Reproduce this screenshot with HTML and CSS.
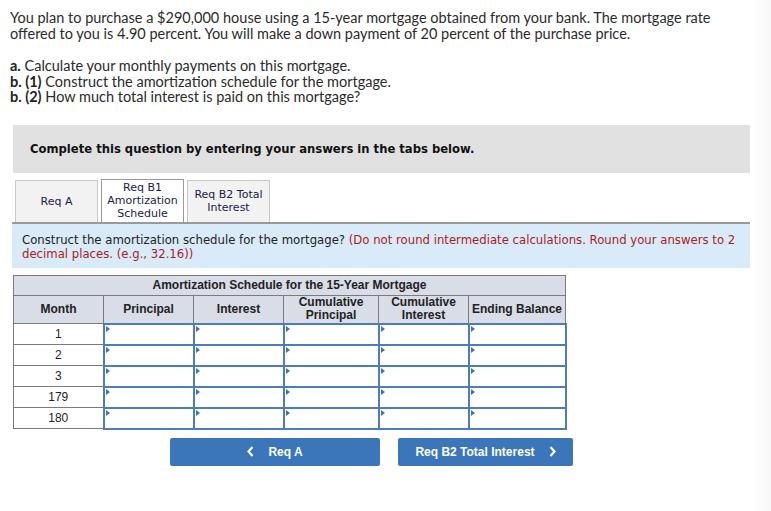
FILE: index.html
```html
<!DOCTYPE html>
<html>
<head>
<meta charset="utf-8">
<link rel="stylesheet" href="styles.css">
</head>
<body>
<div class="page">
  <div class="intro">
    <p>You plan to purchase a $290,000 house using a 15-year mortgage obtained from your bank. The mortgage rate offered to you is 4.90 percent. You will make a down payment of 20 percent of the purchase price.</p>
    <p class="last"><b>a.</b> Calculate your monthly payments on this mortgage.<br>
    <b>b. (1)</b> Construct the amortization schedule for the mortgage.<br>
    <b>b. (2)</b> How much total interest is paid on this mortgage?</p>
  </div>

  <div class="banner">Complete this question by entering your answers in the tabs below.</div>

  <div class="tabs">
    <div class="tab">Req A</div>
    <div class="tab active">Req B1<br>Amortization<br>Schedule</div>
    <div class="tab">Req B2 Total<br>Interest</div>
  </div>

  <div class="instr">Construct the amortization schedule for the mortgage? <span class="red">(Do not round intermediate calculations. Round your answers to 2 decimal places. (e.g., 32.16))</span></div>

  <table class="sched">
    <colgroup>
      <col class="w90"><col class="w90"><col class="w90"><col class="w95"><col class="w90"><col class="w97">
    </colgroup>
    <tr><th colspan="6" class="title">Amortization Schedule for the 15-Year Mortgage</th></tr>
    <tr class="hdr">
      <th>Month</th>
      <th>Principal</th>
      <th>Interest</th>
      <th>Cumulative<br>Principal</th>
      <th>Cumulative<br>Interest</th>
      <th>Ending Balance</th>
    </tr>
    <tr><td class="m">1</td><td class="in"></td><td class="in"></td><td class="in"></td><td class="in"></td><td class="in"></td></tr>
    <tr><td class="m">2</td><td class="in"></td><td class="in"></td><td class="in"></td><td class="in"></td><td class="in"></td></tr>
    <tr><td class="m">3</td><td class="in"></td><td class="in"></td><td class="in"></td><td class="in"></td><td class="in"></td></tr>
    <tr><td class="m">179</td><td class="in"></td><td class="in"></td><td class="in"></td><td class="in"></td><td class="in"></td></tr>
    <tr><td class="m">180</td><td class="in"></td><td class="in"></td><td class="in"></td><td class="in"></td><td class="in"></td></tr>
  </table>

  <div class="nav">
    <div class="btn prev"><svg class="chev" width="7" height="11" viewBox="0 0 7 11"><polyline points="5.5,1 1.5,5.5 5.5,10" fill="none" stroke="#fff" stroke-width="2.2"/></svg>Req A</div>
    <div class="btn next">Req B2 Total Interest<svg class="chev" width="7" height="11" viewBox="0 0 7 11"><polyline points="1.5,1 5.5,5.5 1.5,10" fill="none" stroke="#fff" stroke-width="2.2"/></svg></div>
  </div>
</div>
<div class="edge"></div>
</body>
</html>
```

FILE: styles.css
```css
html, body { margin: 0; padding: 0; background: #fff; }
body { position: relative; width: 771px; height: 511px; overflow: hidden; }
.page { padding: 10px 0 0 0; }

.intro { padding: 0 10px; max-width: 725px; font-family: "Lato", "Liberation Sans", sans-serif; font-size: 14.5px; line-height: 15.6px; color: #2b2b2b; }
.intro p { margin: 0 0 17px 0; }
.intro p.last { margin-bottom: 0; }
.intro b { font-weight: bold; color: #222; }

.banner {
  margin: 20px 21px 0 13px; height: 48px; background: #e1e1e1;
  font-family: "DejaVu Sans", Verdana, sans-serif; font-weight: bold; font-size: 11.6px;
  color: #111; display: flex; align-items: center; padding-left: 17px;
}

.tabs { display: flex; gap: 3px; margin: 6px 0 0 15px; align-items: flex-end; height: 43px; }
.tab {
  width: 83px; height: 42px; box-sizing: border-box; background: #f2f2f2; border: 1px solid #c8c8c8; border-bottom: none;
  font-family: "DejaVu Sans", Verdana, sans-serif; font-size: 11px; line-height: 13px; color: #1a1a4a;
  display: flex; align-items: center; justify-content: center; text-align: center;
}
.tab.active { background: #fff; border-color: #9a9a9a; height: 43px; }

.instr {
  margin: 0 21px 0 12px; background: #d9ebf8; border-top: 2px solid #9a9a9a; height: 46px; box-sizing: border-box;
  padding: 9px 2px 0 10px;
  font-family: "DejaVu Sans", Verdana, sans-serif; font-size: 11.7px; line-height: 14px; color: #222;
}
.instr .red { color: #ab1c1c; }

.sched {
  margin: 7px 0 0 13px; border-collapse: collapse; table-layout: fixed; width: 552px;
  font-family: "Liberation Sans", Arial, sans-serif; font-size: 12px; color: #222;
}
.w90 { width: 90px; } .w95 { width: 95px; } .w97 { width: 97px; }
.sched th { background: #d8dde7; border: 1px solid #7b7b7b; font-weight: bold; padding: 0; }
.sched th.title { height: 19px; }
.sched tr.hdr th { height: 27px; line-height: 13px; }
.sched td { height: 19px; padding: 0; }
.sched td.m { border: 1px solid #7b7b7b; text-align: center; background: #fff; }
.sched td.in { border: 2px solid #4c7db8; background: #fff; position: relative; }
.sched td.in::before {
  content: ""; position: absolute; left: 1px; top: 1px; width: 0; height: 0;
  border-top: 3px solid transparent; border-bottom: 3px solid transparent; border-left: 4px solid #3a73c0;
}

.nav { display: flex; gap: 18px; margin: 8px 0 0 170px; }
.btn {
  height: 28px; background: #3a76b9; border-radius: 2px; color: #fff;
  font-family: "Liberation Sans", Arial, sans-serif; font-weight: bold; font-size: 12px;
  display: flex; align-items: center; justify-content: center;
}
.btn.prev { width: 210px; }
.btn.next { width: 175px; }
.prev .chev { margin-right: 14px; }
.next .chev { margin-left: 14px; }

.edge { position: absolute; top: 0; right: 0; width: 16px; height: 511px; background: linear-gradient(to right, #fdfdfd, #f8f8f8); }
```
